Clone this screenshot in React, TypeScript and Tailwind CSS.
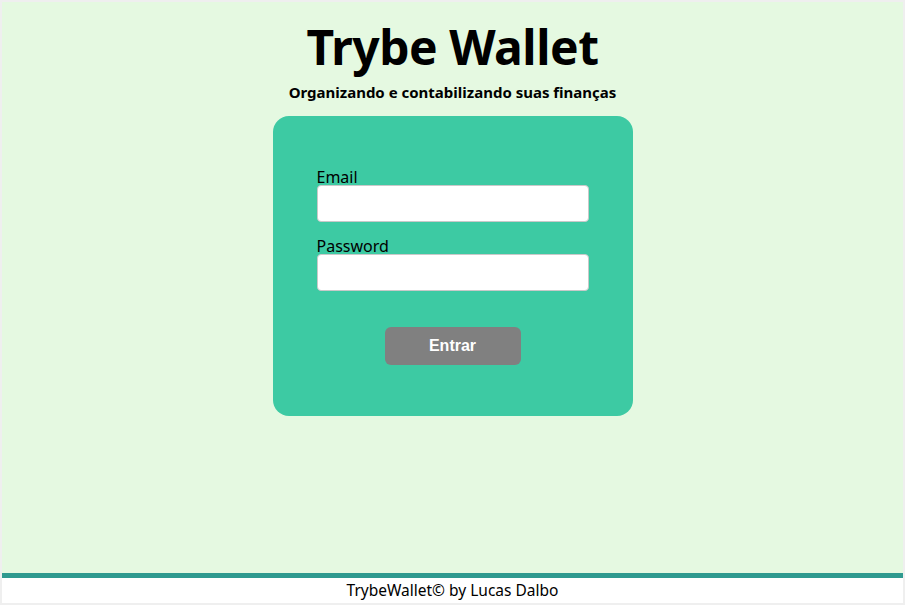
import React from 'react';

const App: React.FC = () => {
  return (
    <div className="h-[605px] w-[905px] border-2 border-[#efefef] flex flex-col bg-white font-['Noto_Sans',sans-serif] text-black">
      {/* Main */}
      <main className="flex-1 bg-[#e5f9e1] flex flex-col items-center">
        <h1 className="mt-[16px] text-[48px] leading-[58px] font-bold tracking-[-0.5px]">Trybe Wallet</h1>
        <p className="mt-[6px] text-[15px] leading-[20px] font-bold">Organizando e contabilizando suas finanças</p>

        <form
          className="mt-[14px] w-[360px] h-[300px] bg-[#3dcaa3] rounded-2xl pt-[52px] px-[44px] flex flex-col"
          onSubmit={(e) => e.preventDefault()}
        >
          <label className="flex flex-col text-[16px] leading-[18px]">
            Email
            <input
              type="email"
              className="mt-[-1px] h-[37px] w-[272px] bg-white rounded-[4px] border border-[#c9c9c9] px-2 outline-none"
            />
          </label>
          <label className="flex flex-col text-[16px] leading-[18px] mt-[15px]">
            Password
            <input
              type="password"
              className="mt-[-1px] h-[37px] w-[272px] bg-white rounded-[4px] border border-[#c9c9c9] px-2 outline-none"
            />
          </label>
          <button
            type="submit"
            className="mt-[36px] self-center w-[136px] h-[38px] bg-[#808080] text-white rounded-md font-['Liberation_Sans',sans-serif] font-bold text-[16px]"
          >
            Entrar
          </button>
        </form>
      </main>

      {/* Footer */}
      <footer className="border-t-[5px] border-[#2f9a8f] h-[30px] flex items-center justify-center text-[15.5px] bg-white">
        TrybeWallet© by Lucas Dalbo
      </footer>
    </div>
  );
};

export default App;
